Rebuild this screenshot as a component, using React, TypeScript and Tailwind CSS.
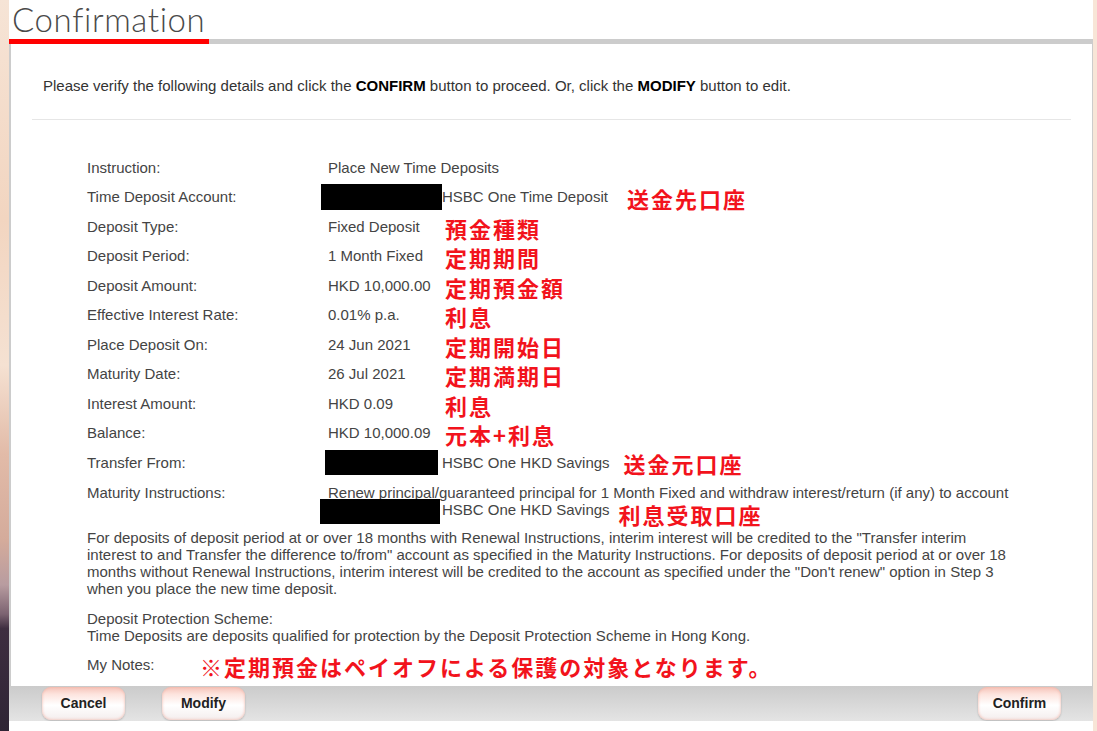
import type { ReactNode } from "react";

const body = "font-['Liberation_Sans',Arial,sans-serif]";
const jp = "font-['Noto_Sans_CJK_JP','Noto_Sans',sans-serif]";

function Note({ children, className = "" }: { children: ReactNode; className?: string }) {
  return (
    <span className={`${jp} text-[22px] font-bold leading-none tracking-[2px] text-[#f2131c] whitespace-nowrap ${className}`}>
      {children}
    </span>
  );
}

function Row({ label, children }: { label: string; children: ReactNode }) {
  return (
    <div className="flex h-[29.5px] items-center">
      <div className="w-[241px] shrink-0">{label}</div>
      <div className="flex items-center">{children}</div>
    </div>
  );
}

function Masked({ className = "" }: { className?: string }) {
  return <span className={`block shrink-0 bg-black ${className}`} />;
}

function Btn({ label, className = "" }: { label: string; className?: string }) {
  return (
    <button
      className={`h-[33px] w-[83px] rounded-[9px] bg-[linear-gradient(to_bottom,#f5c3b8_0%,#fde4de_22%,#ffffff_55%,#f4eded_100%)] text-[14px] font-bold text-[#222] shadow-[inset_0_0_3px_#f0b2a5,0_1px_2px_rgba(0,0,0,0.2)] ${body} ${className}`}
    >
      {label}
    </button>
  );
}

const simple: [string, string, string][] = [
  ["Deposit Type:", "Fixed Deposit", "預金種類"],
  ["Deposit Period:", "1 Month Fixed", "定期期間"],
  ["Deposit Amount:", "HKD 10,000.00", "定期預金額"],
  ["Effective Interest Rate:", "0.01% p.a.", "利息"],
  ["Place Deposit On:", "24 Jun 2021", "定期開始日"],
  ["Maturity Date:", "26 Jul 2021", "定期満期日"],
  ["Interest Amount:", "HKD 0.09", "利息"],
  ["Balance:", "HKD 10,000.09", "元本+利息"],
];

export default function App() {
  return (
    <div className={`flex h-[731px] w-[1097px] overflow-hidden bg-white ${body}`}>
      {/* background strip left */}
      <div className="w-[9px] shrink-0 bg-[linear-gradient(to_bottom,#f6e4d6_0%,#f2d5c0_30%,#f5e1d2_50%,#e2bba8_62%,#d4ab9b_74%,#b89ca0_80%,#7c6371_84%,#3e2e40_86%,#2f2535_100%)]" />

      <div className="flex w-[1084px] shrink-0 flex-col">
        <div className="h-[39px] bg-white pl-[3px]">
          <h1 className="font-['Lato',sans-serif] text-[33px] font-light leading-[39px] tracking-[0.6px] text-[#4a4a4a]">
            Confirmation
          </h1>
        </div>
        <div className="flex h-[5px]">
          <div className="w-[200px] bg-[#ff0000]" />
          <div className="flex-1 bg-[#cccccc]" />
        </div>

        <div className="h-[642px] border-r border-l-2 border-[#cccccc] px-[21px] text-[15px] text-[#444]">
          <p className="pl-[11px] pt-[33px] leading-[17px] text-[#333]">
            Please verify the following details and click the <b className="text-black">CONFIRM</b> button to proceed. Or, click the{" "}
            <b className="text-black">MODIFY</b> button to edit.
          </p>
          <div className="mt-[25px] border-t border-[#e6e6e6]" />

          <div className="mt-[33px] pl-[55px]">
            <Row label="Instruction:">
              <span>Place New Time Deposits</span>
            </Row>
            <Row label="Time Deposit Account:">
              <Masked className="-ml-[7px] h-[26px] w-[121px]" />
              <span>HSBC One Time Deposit</span>
              <Note className="ml-[19px] mt-[1px]">送金先口座</Note>
            </Row>
            {simple.map(([label, value, note]) => (
              <Row key={label} label={label}>
                <span className="w-[117px] shrink-0 whitespace-nowrap">{value}</span>
                <Note className="mt-[2px]">{note}</Note>
              </Row>
            ))}
            <Row label="Transfer From:">
              <Masked className="-ml-[3px] h-[25px] w-[113px]" />
              <span className="ml-[4px]">HSBC One HKD Savings</span>
              <Note className="ml-[14px]">送金元口座</Note>
            </Row>

            <div className="flex h-[51px] items-start pt-[6px] leading-[17px]">
              <div className="w-[241px] shrink-0">Maturity Instructions:</div>
              <div>
                <div className="whitespace-nowrap">
                  Renew principal/guaranteed principal for 1 Month Fixed and withdraw interest/return (if any) to account
                </div>
                <div className="flex items-start">
                  <Masked className="-ml-[8px] -mt-[2px] h-[25px] w-[120px]" />
                  <span className="ml-[2px]">HSBC One HKD Savings</span>
                  <Note className="ml-[9px] mt-[2px]">利息受取口座</Note>
                </div>
              </div>
            </div>

            <p className="leading-[17px]">
              For deposits of deposit period at or over 18 months with Renewal Instructions, interim interest will be credited to the "Transfer interim
              <br />
              interest to and Transfer the difference to/from" account as specified in the Maturity Instructions. For deposits of deposit period at or over 18
              <br />
              months without Renewal Instructions, interim interest will be credited to the account as specified under the "Don't renew" option in Step 3
              <br />
              when you place the new time deposit.
            </p>

            <p className="mt-[13px] leading-[17px]">
              Deposit Protection Scheme:
              <br />
              Time Deposits are deposits qualified for protection by the Deposit Protection Scheme in Hong Kong.
            </p>

            <div className="mt-[11px] flex h-[22px] items-center">
              <div className="w-[113px] shrink-0">My Notes:</div>
              <Note>※定期預金はペイオフによる保護の対象となります。</Note>
            </div>
          </div>
        </div>

        <div className="flex h-[35px] items-center bg-[linear-gradient(to_bottom,#cbcbcb,#e4e4e4)]">
          <Btn label="Cancel" className="ml-[33px]" />
          <Btn label="Modify" className="ml-[37px]" />
          <Btn label="Confirm" className="ml-auto mr-[32px]" />
        </div>
        <div className="flex-1 bg-white" />
      </div>

      <div className="w-[4px] shrink-0 bg-[#f8e5d7]" />
    </div>
  );
}
